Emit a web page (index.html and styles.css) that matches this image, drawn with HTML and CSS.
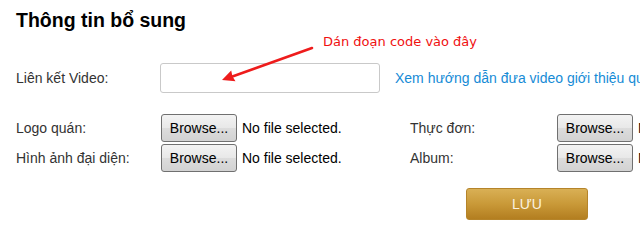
FILE: index.html
```html
<!DOCTYPE html>
<html lang="vi">
<head>
<meta charset="utf-8">
<title>Thông tin bổ sung</title>
<link rel="stylesheet" href="styles.css">
</head>
<body>
<div class="page">
  <h2 class="title">Thông tin bổ sung</h2>
  <div class="hint">Dán đoạn code vào đây</div>
  <div class="video-row">
    <label class="label">Liên kết Video:</label>
    <input class="video-input" type="text">
    <a class="guide" href="#">Xem hướng dẫn đưa video giới thiệu quán</a>
  </div>
  <div class="files">
    <span class="label">Logo quán:</span>
    <span class="file"><button class="browse" type="button">Browse...</button><span class="fname">No file selected.</span></span>
    <span class="label">Thực đơn:</span>
    <span class="file"><button class="browse" type="button">Browse...</button><span class="fname">No file selected.</span></span>
    <span class="label">Hình ảnh đại diện:</span>
    <span class="file"><button class="browse" type="button">Browse...</button><span class="fname">No file selected.</span></span>
    <span class="label">Album:</span>
    <span class="file"><button class="browse" type="button">Browse...</button><span class="fname">No file selected.</span></span>
  </div>
  <div class="actions">
    <button class="save" type="button">LƯU</button>
  </div>
  <svg class="arrow" width="640" height="241" viewBox="0 0 640 241" aria-hidden="true">
    <line x1="312" y1="48" x2="231" y2="77" stroke="#ee1c1c" stroke-width="2.6" stroke-linecap="round"/>
    <polygon points="222,80 235.5,81.2 232.5,76.5 231.2,70.6" fill="#ee1c1c"/>
  </svg>
</div>
</body>
</html>
```

FILE: styles.css
```css
html, body {
  margin: 0;
  padding: 0;
  overflow: hidden;
  background: #fff;
}
body {
  width: 640px;
  height: 241px;
  font-family: "Liberation Sans", Arial, sans-serif;
  font-size: 14px;
  color: #333;
}
.page {
  position: relative;
  padding-left: 16px;
  height: 241px;
  white-space: nowrap;
  overflow: hidden;
}
.title {
  margin: 9px 0 0;
  font-size: 19.5px;
  line-height: 22px;
  font-weight: bold;
  color: #000;
}
.hint {
  margin: 3px 0 0 307px;
  font-family: "DejaVu Sans", Verdana, sans-serif;
  font-size: 13px;
  line-height: 16px;
  color: #f01010;
}
.video-row {
  margin-top: 13px;
  display: flex;
  align-items: center;
  height: 30px;
}
.label {
  display: block;
  flex: none;
  width: 144px;
  color: #333;
  line-height: 16px;
}
.video-input {
  box-sizing: border-box;
  width: 220px;
  height: 30px;
  margin: 0;
  border: 1px solid #c9c9c9;
  border-radius: 3px;
  background: #fff;
  flex: none;
}
.guide {
  flex: none;
  margin-left: 15px;
  color: #168bd6;
  text-decoration: none;
  line-height: 16px;
}
.files {
  margin-top: 21px;
  display: grid;
  grid-template-columns: 144px 250px 146px 200px;
  grid-auto-rows: 28px;
  row-gap: 2px;
  align-items: center;
}
.file {
  display: flex;
  align-items: center;
  height: 28px;
}
.browse {
  box-sizing: border-box;
  width: 76px;
  height: 28px;
  margin: 0 0 0 1px;
  padding: 0;
  border: 1px solid #707070;
  border-radius: 3px;
  background: linear-gradient(#f3f3f3, #e8e8e8 50%, #dcdcdc 51%, #d2d2d2);
  font-family: "Liberation Sans", Arial, sans-serif;
  font-size: 14px;
  color: #000;
  flex: none;
}
.fname {
  margin-left: 5px;
  color: #000;
}
.actions {
  margin-top: 16px;
  padding-left: 450px;
}
.save {
  box-sizing: border-box;
  width: 122px;
  height: 32px;
  margin: 0;
  padding: 0;
  border: 1px solid #b5842a;
  border-radius: 3px;
  background: linear-gradient(#d9b055, #c99938 50%, #b37e20);
  font-family: "Liberation Sans", Arial, sans-serif;
  font-size: 14px;
  color: #fbf3e0;
}
.arrow {
  position: absolute;
  left: 0;
  top: 0;
  pointer-events: none;
}
```
